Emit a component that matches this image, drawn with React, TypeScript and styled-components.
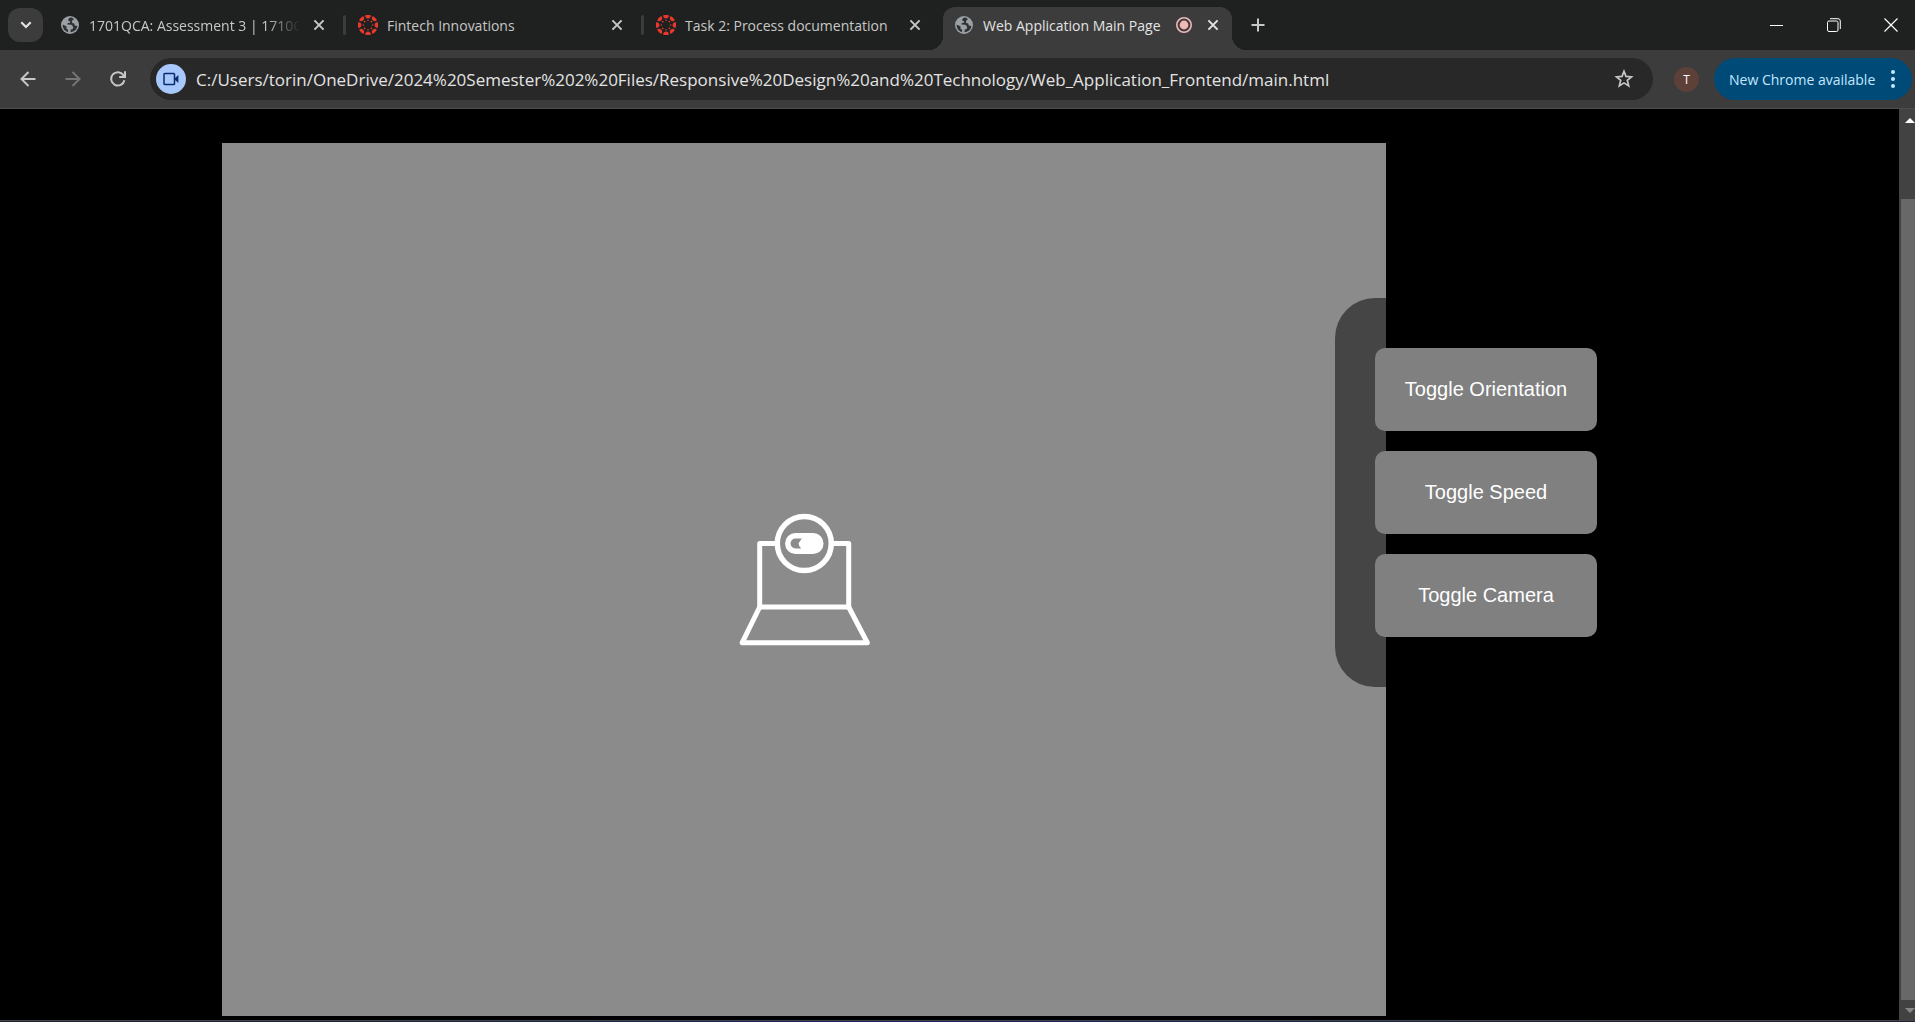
import React from 'react';
import styled, { createGlobalStyle } from 'styled-components';

const uiFont = `'Segoe UI', 'Open Sans', 'Noto Sans', sans-serif`;

const GlobalStyle = createGlobalStyle`
  *, *::before, *::after { box-sizing: border-box; }
  body { margin: 0; background: #000; font-family: ${uiFont}; }
  button, input { font-family: inherit; }
`;

const Window = styled.div`
  display: flex;
  flex-direction: column;
  min-height: 100vh;
  background: #000;
`;

const TabStrip = styled.header`
  display: flex;
  align-items: flex-end;
  height: 50px;
  padding-left: 8px;
  background: #1f2120;
`;

const IconButton = styled.button<{ $size?: number; $color?: string }>`
  display: flex;
  align-items: center;
  justify-content: center;
  flex: none;
  width: ${(p) => p.$size ?? 20}px;
  height: ${(p) => p.$size ?? 20}px;
  padding: 0;
  border: 0;
  border-radius: 50%;
  background: transparent;
  color: ${(p) => p.$color ?? '#c7c7c7'};
`;

const TabSearch = styled(IconButton)`
  width: 35px;
  height: 34px;
  margin: 0 6px 8px 0;
  border-radius: 12px;
  background: #3c3c3c;
  color: #e3e3e3;
`;

const Tab = styled.div<{ $active?: boolean }>`
  position: relative;
  display: flex;
  align-items: center;
  gap: 9px;
  flex: 0 1 289px;
  min-width: 0;
  height: 43px;
  padding: 0 9px 7px 11px;
  border-radius: 12px 12px 0 0;
  background: ${(p) => (p.$active ? '#3c3c3c' : 'transparent')};
  color: ${(p) => (p.$active ? '#e3e3e3' : '#c7c7c7')};

  &::before,
  &::after {
    content: '';
    display: ${(p) => (p.$active ? 'block' : 'none')};
    position: absolute;
    bottom: 0;
    width: 14px;
    height: 14px;
  }
  &::before {
    left: -14px;
    background: radial-gradient(circle at 0 0, transparent 14px, #3c3c3c 14px);
  }
  &::after {
    right: -14px;
    background: radial-gradient(circle at 100% 0, transparent 14px, #3c3c3c 14px);
  }
`;

const TabTitle = styled.span<{ $fade?: boolean }>`
  flex: 1;
  min-width: 0;
  padding-top: 2px;
  overflow: hidden;
  white-space: nowrap;
  font-size: 14px;
  line-height: 24px;
  ${(p) => p.$fade && 'mask-image: linear-gradient(to right, #000 84%, transparent 100%);'}
`;

const TabDivider = styled.span<{ $hidden?: boolean }>`
  flex: none;
  width: 3px;
  height: 20px;
  margin: 0 1px 15px 5px;
  border-radius: 2px;
  background: ${(p) => (p.$hidden ? 'transparent' : '#3c3c3c')};
`;

const NewTab = styled(IconButton)`
  margin: 0 0 9px 10px;
`;

const WindowControls = styled.div`
  display: flex;
  height: 50px;
  margin-left: auto;
`;

const WindowButton = styled.button`
  display: flex;
  align-items: center;
  justify-content: center;
  width: 57px;
  padding: 0;
  border: 0;
  background: transparent;
  color: #fff;

  &:last-child {
    width: 53px;
    padding-left: 4px;
  }
`;

const Toolbar = styled.div`
  display: flex;
  align-items: center;
  height: 59px;
  padding: 0 3px 0 13px;
  border-bottom: 1px solid #4c4c4c;
  background: #3c3c3c;
`;

const NavButtons = styled.nav`
  display: flex;
  gap: 15px;
  margin-right: 17px;
`;

const AddressBar = styled.label`
  display: flex;
  align-items: center;
  flex: 1;
  min-width: 0;
  height: 42px;
  padding: 0 14px 0 6px;
  border-radius: 21px;
  background: #282828;
`;

const CameraChip = styled.button`
  display: flex;
  align-items: center;
  justify-content: center;
  flex: none;
  width: 30px;
  height: 30px;
  padding: 0;
  border: 0;
  border-radius: 50%;
  background: #a8c7fa;
  color: #062e6f;
`;

const AddressInput = styled.input`
  flex: 1;
  min-width: 0;
  height: 30px;
  padding: 0 0 0 10px;
  border: 0;
  outline: 0;
  background: transparent;
  color: #e3e3e3;
  font-size: 17px;
`;

const Avatar = styled.button`
  width: 25px;
  height: 25px;
  margin: 0 15px 0 21px;
  padding: 0;
  border: 0;
  border-radius: 50%;
  background: #5d4037;
  color: #fff;
  font-size: 12px;
  line-height: 25px;
`;

const UpdateButton = styled.button`
  display: flex;
  align-items: center;
  justify-content: space-between;
  flex: none;
  width: 198px;
  height: 42px;
  padding: 0 16px 0 15px;
  border: 0;
  border-radius: 21px;
  background: #004a77;
  color: #c2e7ff;
  font-size: 14px;
  white-space: nowrap;
`;

const Viewport = styled.div`
  display: flex;
  flex: 1;
`;

const Page = styled.main`
  display: flex;
  align-items: flex-start;
  justify-content: center;
  flex: 1;
  min-width: 0;
  padding: 34px 40px 4px 0;
  background: #000;
`;

const Video = styled.section`
  display: flex;
  align-items: center;
  justify-content: center;
  flex: 0 1 1164px;
  min-width: 0;
  aspect-ratio: 4 / 3;
  background: #8b8b8c;
`;

const Controls = styled.aside`
  display: flex;
  flex-direction: column;
  gap: 20px;
  z-index: 1;
  flex: none;
  margin: 155px 0 0 -51px;
  padding: 50px 40px;
  border-radius: 40px;
  background: rgba(0, 0, 0, 0.5);
`;

const ControlButton = styled.button`
  padding: 30px;
  border: 0;
  border-radius: 10px;
  background: #808080;
  color: #fff;
  font-family: Arial, 'Liberation Sans', sans-serif;
  font-size: 20px;
  line-height: 23px;
`;

const Scrollbar = styled.div`
  display: flex;
  flex-direction: column;
  flex: none;
  width: 16px;
  padding-left: 2px;
  background: #424242;
`;

const ScrollArrow = styled.span<{ $down?: boolean }>`
  display: flex;
  justify-content: flex-end;
  align-items: center;
  height: ${(p) => (p.$down ? 20 : 23)}px;
  color: ${(p) => (p.$down ? '#868686' : '#fff')};
`;

const ScrollThumb = styled.span`
  flex: 1;
  margin-top: 67px;
  background: #686868;
`;

const WindowEdge = styled.footer`
  height: 2px;
  border-top: 1px solid #42454c;
  background: linear-gradient(to right, #20222a, #1c2648 30%, #1e2058 45%, #1c2648 70%, #22222e 85%);
`;

const Globe = () => (
  <svg width="20" height="20" viewBox="0 0 20 20" aria-hidden="true">
    <circle cx="10" cy="10" r="9" fill="#9aa0a6" />
    <path
      d="M10.4 2.6 C9 3.2 8 4.3 8.2 5.6 L10.2 6.4 L10 7.8 L7.8 8 L7.4 9.6 L11.2 9.8 C12.6 10.2 12.4 11.4 13.2 12 L12.8 14 L10.8 14.6 L10.4 17.2 C14.4 17 17 14.4 17.4 11 L14.8 10.6 L14.2 8.6 L12.2 8 L12 5.8 L14 4.2 C13 3.2 11.8 2.6 10.4 2.6 Z M2.7 9.4 C2.4 13.2 4.8 16.2 8 17 L8.2 15 L6.4 13.4 L6.6 11.4 Z"
      fill="#303231"
    />
  </svg>
);

const CanvasLogo = () => (
  <svg width="20" height="20" viewBox="0 0 20 20" fill="#e8392d" aria-hidden="true">
    {[0, 45, 90, 135, 180, 225, 270, 315].map((angle) => (
      <g key={angle} transform={`rotate(${angle} 10 10)`}>
        <path d="M7 0.4 Q10 -0.6 13 0.4 Q12.5 3.4 10 3.4 Q7.5 3.4 7 0.4 Z" />
        <circle cx="10" cy="5.3" r="0.8" />
      </g>
    ))}
  </svg>
);

const Cross = () => (
  <svg width="12" height="12" viewBox="0 0 12 12" fill="none" stroke="currentColor" strokeWidth="2" aria-hidden="true">
    <path d="M1.4 1.4 L10.6 10.6 M10.6 1.4 L1.4 10.6" />
  </svg>
);

const Recording = () => (
  <svg width="18" height="18" viewBox="0 0 18 18" role="img" aria-label="Recording">
    <circle cx="8" cy="9" r="7.2" fill="none" stroke="#f2b8b5" strokeWidth="1.6" />
    <circle cx="8" cy="9" r="4.4" fill="#f2b8b5" />
  </svg>
);

const Arrow = ({ flip }: { flip?: boolean }) => (
  <svg width="16" height="16" viewBox="0 0 16 16" fill="none" stroke="currentColor" strokeWidth="2" aria-hidden="true">
    <path d={flip ? 'M0.5 8 H14.5 M7.5 1 L14.5 8 L7.5 15' : 'M15.5 8 H1.5 M8.5 1 L1.5 8 L8.5 15'} />
  </svg>
);

const Reload = () => (
  <svg width="18" height="18" viewBox="0 0 18 18" fill="none" stroke="currentColor" strokeWidth="2" aria-hidden="true">
    <path d="M15.4 10.2 A6.7 6.7 0 1 1 14.4 5.1 L15.6 6.6" />
    <path d="M16 1.2 V7 H10.2" />
  </svg>
);

const Camera = () => (
  <svg width="16" height="14" viewBox="0 0 16 14" aria-hidden="true">
    <rect x="1" y="1.5" width="10.5" height="11" rx="0.8" fill="none" stroke="currentColor" strokeWidth="1.5" />
    <path d="M11.8 6.2 L15.4 3 V11 L11.8 7.8 Z" fill="currentColor" />
  </svg>
);

const Star = () => (
  <svg width="20" height="20" viewBox="0 0 20 20" fill="none" stroke="currentColor" strokeWidth="1.7" aria-hidden="true">
    <path d="M10 2.4 L12 7.4 L17.5 7.9 L13.3 11.4 L14.7 16.9 L10 13.9 L5.3 16.9 L6.7 11.4 L2.5 7.9 L8 7.4 Z" />
  </svg>
);

const Dots = () => (
  <svg width="6" height="20" viewBox="0 0 6 20" fill="currentColor" aria-hidden="true">
    <circle cx="3" cy="3" r="2" />
    <circle cx="3" cy="10" r="2" />
    <circle cx="3" cy="17" r="2" />
  </svg>
);

const LaptopCamera = () => (
  <svg width="132" height="134" viewBox="0 0 132 134" fill="none" stroke="#fff" strokeWidth="5" strokeLinejoin="round" role="img" aria-label="Camera off">
    <circle cx="66.3" cy="30.5" r="27" strokeWidth="5.5" />
    <path d="M38 30.5 H21.700 V94 H110.700 V30.5 H94" />
    <path d="M21.700 94 L4.200 129.700 H129.300 L110.700 94" />
    <rect x="49.8" y="22.8" width="33" height="15.5" rx="7.7" strokeWidth="5.500" />
    <path d="M63 23 H75 A7.5 7.5 0 0 1 75 38 H62 L64 36 A10 10 0 0 1 61 30.500 L64.500 25 Z" fill="#fff" strokeWidth="1" />
  </svg>
);

type TabInfo = { title: string; icon: 'globe' | 'canvas'; active?: boolean; fade?: boolean };

const tabs: TabInfo[] = [
  { title: '1701QCA: Assessment 3 | 1710C', icon: 'globe', fade: true },
  { title: 'Fintech Innovations', icon: 'canvas' },
  { title: 'Task 2: Process documentation', icon: 'canvas' },
  { title: 'Web Application Main Page', icon: 'globe', active: true },
];

const controls = ['Toggle Orientation', 'Toggle Speed', 'Toggle Camera'];

export default function App() {
  return (
    <Window>
      <GlobalStyle />
      <TabStrip>
        <TabSearch aria-label="Search tabs">
          <svg width="12" height="8" viewBox="0 0 12 8" fill="none" stroke="currentColor" strokeWidth="2.2">
            <path d="M1.3 1.3 L6 6 L10.700 1.3" />
          </svg>
        </TabSearch>
        {tabs.map((tab, i) => (
          <React.Fragment key={tab.title}>
            <Tab $active={tab.active}>
              {tab.icon === 'globe' ? <Globe /> : <CanvasLogo />}
              <TabTitle $fade={tab.fade}>{tab.title}</TabTitle>
              {tab.active && <Recording />}
              <IconButton aria-label={`Close ${tab.title}`} $color={tab.active ? '#e3e3e3' : '#c7c7c7'}>
                <Cross />
              </IconButton>
            </Tab>
            {!tab.active && <TabDivider $hidden={i === 2} />}
          </React.Fragment>
        ))}
        <NewTab aria-label="New tab" $size={32}>
          <svg width="14" height="14" viewBox="0 0 14 14" stroke="currentColor" strokeWidth="2">
            <path d="M7 0.500 V13.500 M0.500 7 H13.500" />
          </svg>
        </NewTab>
        <WindowControls>
          <WindowButton aria-label="Minimize">
            <svg width="13" height="13" viewBox="0 0 13 13" stroke="currentColor">
              <path d="M0 6.500 H13" />
            </svg>
          </WindowButton>
          <WindowButton aria-label="Restore">
            <svg width="14" height="14" viewBox="0 0 14 14" fill="none" stroke="currentColor">
              <rect x="0.5" y="3" width="10.500" height="10.500" rx="1.500" />
              <path d="M3 0.700 H11 Q13.300 0.700 13.300 3 V11" />
            </svg>
          </WindowButton>
          <WindowButton aria-label="Close window">
            <svg width="14" height="14" viewBox="0 0 14 14" stroke="currentColor" strokeWidth="1.200">
              <path d="M0.500 0.500 L13.500 13.500 M13.500 0.500 L0.500 13.500" />
            </svg>
          </WindowButton>
        </WindowControls>
      </TabStrip>

      <Toolbar>
        <NavButtons>
          <IconButton aria-label="Back" $size={30}><Arrow /></IconButton>
          <IconButton aria-label="Forward" $size={30} $color="#757575"><Arrow flip /></IconButton>
          <IconButton aria-label="Reload" $size={30}><Reload /></IconButton>
        </NavButtons>
        <AddressBar>
          <CameraChip aria-label="Camera in use"><Camera /></CameraChip>
          <AddressInput
            aria-label="Address"
            readOnly
            value="C:/Users/torin/OneDrive/2024%20Semester%202%20Files/Responsive%20Design%20and%20Technology/Web_Application_Frontend/main.html"
          />
          <IconButton aria-label="Bookmark this page" $size={30}><Star /></IconButton>
        </AddressBar>
        <Avatar>T</Avatar>
        <UpdateButton>
          New Chrome available
          <Dots />
        </UpdateButton>
      </Toolbar>

      <Viewport>
        <Page>
          <Video>
            <LaptopCamera />
          </Video>
          <Controls>
            {controls.map((label) => (
              <ControlButton key={label}>{label}</ControlButton>
            ))}
          </Controls>
        </Page>
        <Scrollbar aria-hidden="true">
          <ScrollArrow>
            <svg width="10" height="5" viewBox="0 0 10 5" fill="currentColor"><path d="M0 5 L5 0 L10 5 Z" /></svg>
          </ScrollArrow>
          <ScrollThumb />
          <ScrollArrow $down>
            <svg width="10" height="5" viewBox="0 0 10 5" fill="currentColor"><path d="M0 0 L5 5 L10 0 Z" /></svg>
          </ScrollArrow>
        </Scrollbar>
      </Viewport>
      <WindowEdge />
    </Window>
  );
}
